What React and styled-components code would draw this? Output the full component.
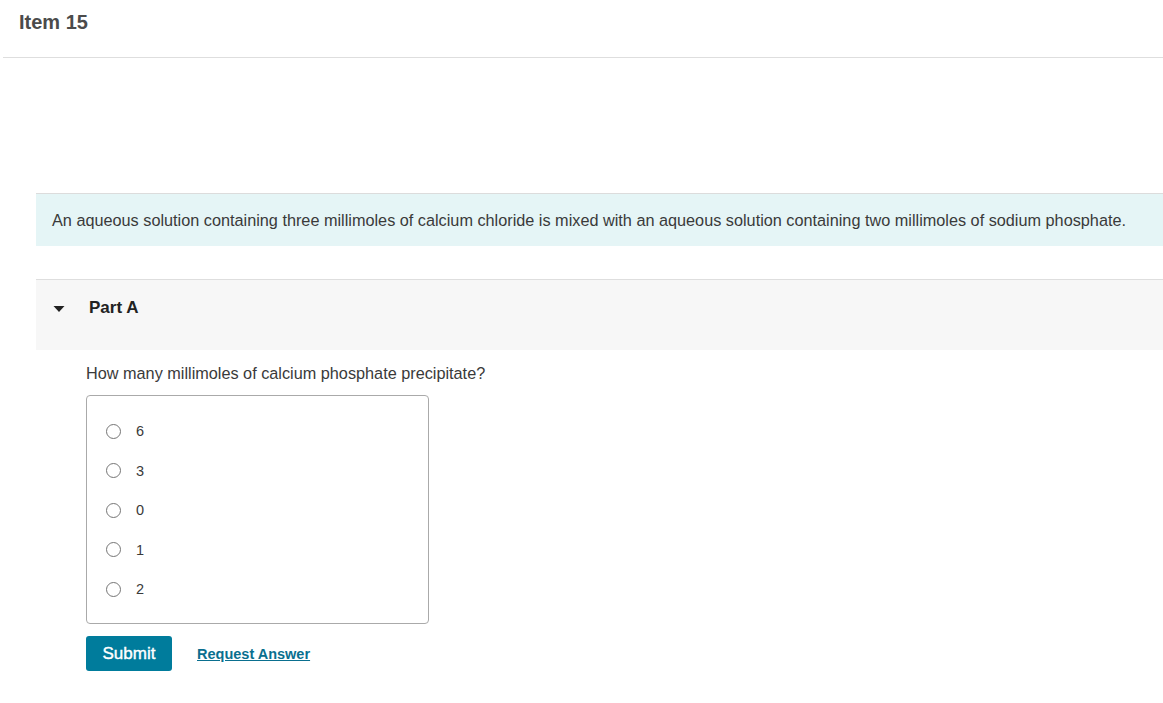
import styled, { createGlobalStyle } from "styled-components";

const GlobalStyle = createGlobalStyle`
  body {
    margin: 0;
    background: #fff;
    font-family: "Liberation Sans", Arial, sans-serif;
    color: #333;
  }
`;

const OPTIONS = ["6", "3", "0", "1", "2"];

const Page = styled.div`
  width: 1163px;
  min-height: 703px;
`;

const Header = styled.header`
  margin-left: 3px;
  height: 58px;
  border-bottom: 1px solid #dedede;
  padding-left: 16px;
  box-sizing: border-box;
`;

const ItemTitle = styled.h1`
  margin: 0;
  padding-top: 10px;
  font-size: 20px;
  line-height: 24px;
  font-weight: 700;
  color: #4b4b4b;
`;

const Content = styled.main`
  padding: 135px 0 0 36px;
  display: flex;
  flex-direction: column;
`;

const Intro = styled.div`
  border-top: 1px solid #dcdcdc;
  background: #e5f5f6;
  height: 53px;
  box-sizing: border-box;
  padding: 0 16px;
  display: flex;
  align-items: center;
  font-size: 16.25px;
  color: #3a3a3a;
`;

const PartHeader = styled.div`
  margin-top: 33px;
  border-top: 1px solid #dedede;
  background: #f7f7f7;
  height: 71px;
  box-sizing: border-box;
  padding: 16px 0 0 17px;
  display: flex;
  align-items: flex-start;
  gap: 24px;
`;

const Caret = styled.svg`
  width: 12px;
  height: 24px;
  flex: none;
`;

const PartTitle = styled.h2`
  margin: 0;
  font-size: 17px;
  line-height: 24px;
  font-weight: 700;
  color: #222;
`;

const Body = styled.div`
  padding: 12px 0 0 50px;
`;

const Question = styled.p`
  margin: 0;
  font-size: 16.25px;
  line-height: 22px;
  color: #3a3a3a;
`;

const OptionsBox = styled.div`
  margin-top: 11px;
  width: 343px;
  height: 229px;
  box-sizing: border-box;
  border: 1px solid #aaa;
  border-radius: 4px;
  padding: 25px 0 0 19px;
  display: flex;
  flex-direction: column;
  gap: 19.5px;
`;

const OptionRow = styled.label`
  display: flex;
  align-items: center;
  height: 20px;
  gap: 15px;
  font-size: 14.5px;
  color: #3a3a3a;
  cursor: pointer;
`;

const Radio = styled.span`
  width: 15px;
  height: 15px;
  box-sizing: border-box;
  border: 1px solid #757575;
  border-radius: 50%;
  background: #fff;
  flex: none;
`;

const Actions = styled.div`
  margin-top: 12px;
  display: flex;
  align-items: center;
  gap: 25px;
`;

const SubmitButton = styled.button`
  width: 86px;
  height: 35px;
  border: none;
  border-radius: 3px;
  background: #007c9c;
  color: #fff;
  font-family: "Liberation Sans", Arial, sans-serif;
  font-size: 17px;
  font-weight: 400;
  -webkit-text-stroke: 0.4px #fff;
  padding: 0;
  cursor: pointer;
`;

const RequestLink = styled.a`
  font-size: 14.5px;
  font-weight: 700;
  color: #0a6f8f;
  text-decoration: underline;
  cursor: pointer;
`;

export default function App() {
  return (
    <Page>
      <GlobalStyle />
      <Header>
        <ItemTitle>Item 15</ItemTitle>
      </Header>
      <Content>
        <Intro>
          An aqueous solution containing three millimoles of calcium chloride is mixed with an aqueous solution containing two millimoles of sodium phosphate.
        </Intro>
        <PartHeader>
          <Caret viewBox="0 0 12 24">
            <path d="M0.5 10 L11.5 10 L6 16 Z" fill="#222" />
          </Caret>
          <PartTitle>Part A</PartTitle>
        </PartHeader>
        <Body>
          <Question>How many millimoles of calcium phosphate precipitate?</Question>
          <OptionsBox>
            {OPTIONS.map((opt) => (
              <OptionRow key={opt}>
                <Radio />
                {opt}
              </OptionRow>
            ))}
          </OptionsBox>
          <Actions>
            <SubmitButton>Submit</SubmitButton>
            <RequestLink>Request Answer</RequestLink>
          </Actions>
        </Body>
      </Content>
    </Page>
  );
}
